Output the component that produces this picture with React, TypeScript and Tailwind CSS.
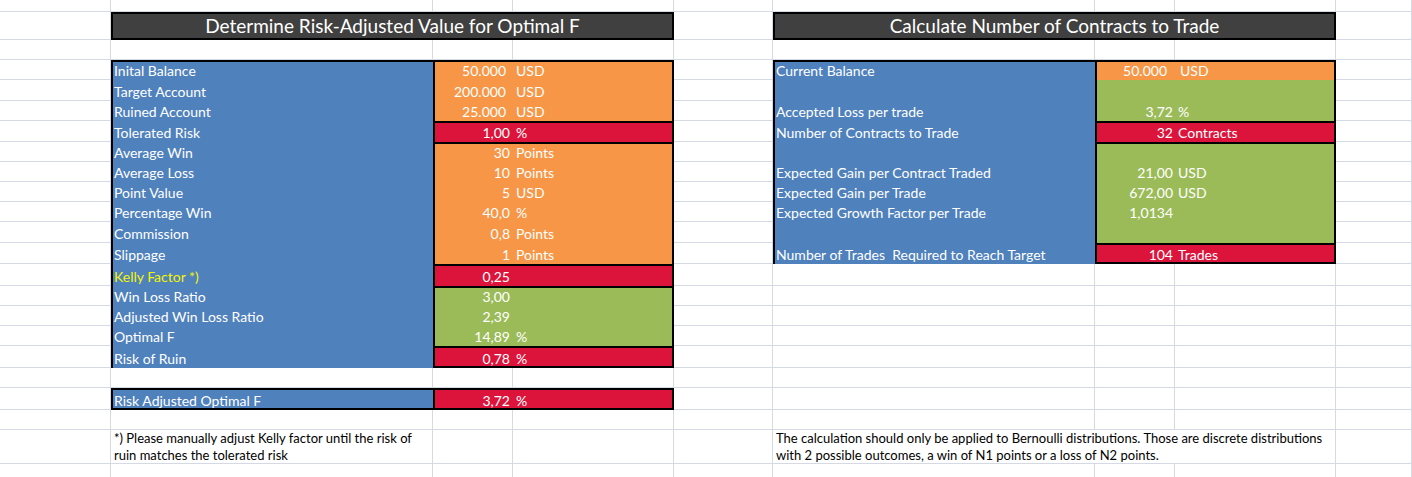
import React, { FC, ReactNode } from 'react';

// gridline colour of the sheet
const LINE = 'border-r border-b border-[#d4d9e4]';

const FILL = {
  o: 'bg-[#f79646]',
  r: 'bg-[#dc143c]',
  g: 'bg-[#9bbb59]',
};

type Entry = {
  label?: string;
  num?: string;
  unit?: string;
  fill: 'o' | 'r' | 'g';
  top?: boolean;
  bottom?: boolean;
  kelly?: boolean;
  numPad?: string;
  unitPad?: string;
};

const LEFT: Entry[] = [
  { label: 'Inital Balance', num: '50.000', unit: 'USD', fill: 'o', top: true, numPad: 'pr-[7px]' },
  { label: 'Target Account', num: '200.000', unit: 'USD', fill: 'o', numPad: 'pr-[7px]' },
  { label: 'Ruined Account', num: '25.000', unit: 'USD', fill: 'o', numPad: 'pr-[7px]' },
  { label: 'Tolerated Risk', num: '1,00', unit: '%', fill: 'r', top: true },
  { label: 'Average Win', num: '30', unit: 'Points', fill: 'o', top: true },
  { label: 'Average Loss', num: '10', unit: 'Points', fill: 'o' },
  { label: 'Point Value', num: '5', unit: 'USD', fill: 'o' },
  { label: 'Percentage Win', num: '40,0', unit: '%', fill: 'o' },
  { label: 'Commission', num: '0,8', unit: 'Points', fill: 'o' },
  { label: 'Slippage', num: '1', unit: 'Points', fill: 'o' },
  { label: 'Kelly Factor *)', num: '0,25', fill: 'r', top: true, kelly: true },
  { label: 'Win Loss Ratio', num: '3,00', fill: 'g', top: true },
  { label: 'Adjusted Win Loss Ratio', num: '2,39', fill: 'g' },
  { label: 'Optimal F', num: '14,89', unit: '%', fill: 'g' },
  { label: 'Risk of Ruin', num: '0,78', unit: '%', fill: 'r', top: true, bottom: true },
];

const RIGHT: Entry[] = [
  { label: 'Current Balance', num: '50.000', unit: 'USD', fill: 'o', top: true, numPad: 'pr-[8px]', unitPad: 'pl-[5px]' },
  { fill: 'g' },
  { label: 'Accepted Loss per trade', num: '3,72', unit: '%', fill: 'g', numPad: 'pr-[2px]' },
  { label: 'Number of Contracts to Trade', num: '32', unit: 'Contracts', fill: 'r', top: true, numPad: 'pr-[2px]' },
  { fill: 'g', top: true },
  { label: 'Expected Gain per Contract Traded', num: '21,00', unit: 'USD', fill: 'g', numPad: 'pr-[2px]' },
  { label: 'Expected Gain per Trade', num: '672,00', unit: 'USD', fill: 'g', numPad: 'pr-[2px]' },
  { label: 'Expected Growth Factor per Trade', num: '1,0134', fill: 'g', numPad: 'pr-[2px]' },
  { fill: 'g' },
  { label: 'Number of Trades  Required to Reach Target', num: '104', unit: 'Trades', fill: 'r', top: true, bottom: true, numPad: 'pr-[2px]' },
];

const HEIGHTS = [
  'h-[20px]', 'h-[21px]', 'h-[20px]', 'h-[21px]', 'h-[20px]',
  'h-[20px]', 'h-[20px]', 'h-[20px]', 'h-[21px]', 'h-[21px]',
  'h-[22px]', 'h-[20px]', 'h-[20px]', 'h-[20px]', 'h-[22px]',
];

const Blank: FC<{ w: string }> = ({ w }) => <div className={`${w} shrink-0 h-full ${LINE}`} />;
const Filler: FC = () => <div className={`flex-1 h-full ${LINE}`} />;

const Row: FC<{ h: string; children: ReactNode }> = ({ h, children }) => (
  <div className={`flex ${h}`}>{children}</div>
);

const Label: FC<{ e: Entry; first?: boolean; boxed?: boolean }> = ({ e, first, boxed }) => (
  <div
    className={`w-[322px] shrink-0 h-full flex items-end bg-[#4f81bd] border-l-2 border-black pl-[1px] ${first || boxed ? 'border-t-2' : ''} ${boxed ? 'shadow-[inset_0_-2px_0_0_#000]' : ''}`}
  >
    <span className={`pb-[1px] leading-[17px] whitespace-pre ${e.kelly ? 'text-[#f4f400]' : 'text-white'}`}>
      {e.label}
    </span>
  </div>
);

const Value: FC<{ e: Entry }> = ({ e }) => (
  <div
    className={`w-[241px] shrink-0 h-full flex items-end text-white border-x-2 border-black ${FILL[e.fill]} ${e.top ? 'border-t-2' : ''} ${e.bottom ? 'shadow-[inset_0_-2px_0_0_#000]' : ''}`}
  >
    <span className={`w-[78px] shrink-0 text-right pb-[1px] leading-[17px] ${e.numPad ?? 'pr-[3px]'}`}>{e.num}</span>
    <span className={`pb-[1px] leading-[17px] whitespace-pre ${e.unitPad ?? 'pl-[3px]'}`}>{e.unit}</span>
  </div>
);

const Title: FC<{ children: ReactNode }> = ({ children }) => (
  <div className="w-[563px] shrink-0 h-full bg-[#404040] border-2 border-black flex items-center justify-center text-white text-[19px] leading-none pb-[1px]">
    {children}
  </div>
);

const EmptyRow: FC<{ h: string }> = ({ h }) => (
  <Row h={h}>
    <Blank w="w-[111px]" />
    <Blank w="w-[322px]" />
    <Blank w="w-[80px]" />
    <Blank w="w-[161px]" />
    <Blank w="w-[99px]" />
    <Blank w="w-[322px]" />
    <Blank w="w-[80px]" />
    <Blank w="w-[161px]" />
    <Filler />
  </Row>
);

export default function App() {
  return (
    <div className="h-screen overflow-hidden bg-white [font-family:Lato,'Liberation_Sans',sans-serif] text-[14px]">
      <EmptyRow h="h-[12px]" />

      {/* Titles */}
      <Row h="h-[28px]">
        <Blank w="w-[111px]" />
        <Title>Determine Risk-Adjusted Value for Optimal F</Title>
        <Blank w="w-[99px]" />
        <Title>Calculate Number of Contracts to Trade</Title>
        <Filler />
      </Row>

      <EmptyRow h="h-[20px]" />

      {/* Both tables */}
      {LEFT.map((left, i) => {
        const right = RIGHT[i];
        return (
          <Row key={i} h={HEIGHTS[i]}>
            <Blank w="w-[111px]" />
            <Label e={left} first={i === 0} />
            <Value e={left} />
            <Blank w="w-[99px]" />
            {right ? (
              <>
                <Label e={right} first={i === 0} />
                <Value e={right} />
              </>
            ) : (
              <>
                <Blank w="w-[322px]" />
                <Blank w="w-[80px]" />
                <Blank w="w-[161px]" />
              </>
            )}
            <Filler />
          </Row>
        );
      })}

      <EmptyRow h="h-[20px]" />

      {/* Result */}
      <Row h="h-[22px]">
        <Blank w="w-[111px]" />
        <Label e={{ label: 'Risk Adjusted Optimal F', fill: 'r' }} boxed />
        <Value e={{ num: '3,72', unit: '%', fill: 'r', top: true, bottom: true }} />
        <Blank w="w-[99px]" />
        <Blank w="w-[322px]" />
        <Blank w="w-[80px]" />
        <Blank w="w-[161px]" />
        <Filler />
      </Row>

      <EmptyRow h="h-[20px]" />

      {/* Notes */}
      <Row h="h-[34px]">
        <Blank w="w-[111px]" />
        <div className={`w-[322px] shrink-0 h-full flex flex-col justify-end pl-[3px] text-[13px] leading-[16.5px] text-black ${LINE}`}>
          <span className="whitespace-nowrap">*) Please manually adjust Kelly factor until the risk of</span>
          <span className="whitespace-nowrap">ruin matches the tolerated risk</span>
        </div>
        <Blank w="w-[80px]" />
        <Blank w="w-[161px]" />
        <Blank w="w-[99px]" />
        <div className={`w-[563px] shrink-0 h-full flex flex-col justify-end pl-[3px] text-[13px] leading-[16.5px] text-black ${LINE}`}>
          <span className="whitespace-nowrap">
            The calculation should only be applied to Bernoulli distributions. Those are discrete distributions
          </span>
          <span className="whitespace-nowrap">with 2 possible outcomes, a win of N1 points or a loss of N2 points.</span>
        </div>
        <Filler />
      </Row>

      <EmptyRow h="h-[20px]" />
      <EmptyRow h="h-[20px]" />
    </div>
  );
}
